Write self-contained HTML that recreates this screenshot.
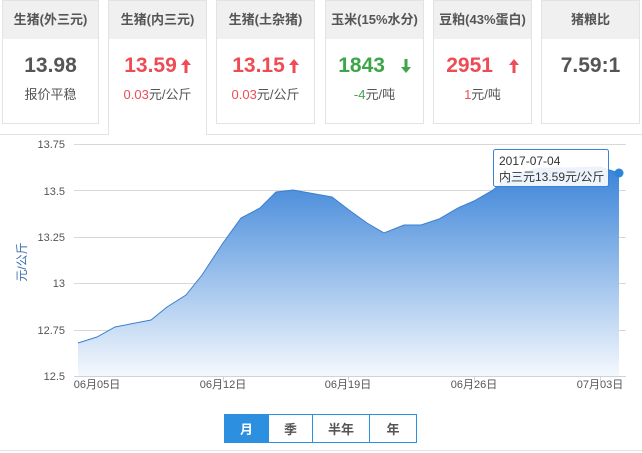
<!DOCTYPE html>
<html><head><meta charset="utf-8"><style>
body{margin:0;width:642px;height:453px;background:#fff;font-family:"Liberation Sans","Noto Sans CJK SC",sans-serif;position:relative;overflow:hidden}
.c{position:absolute;top:0;height:124px;border:1px solid #e3e3e3;background:#fff;box-sizing:border-box;text-align:center}
.c .h{background:#f0f0f0;height:38px;line-height:38px;font-size:13px;font-weight:bold;color:#555}
.c .v{margin-top:12px;font-size:21px;font-weight:bold;color:#555;height:30px;line-height:30px}
.c .s{font-size:13px;color:#555;margin-top:3px}
.r{color:#ee4b55!important}.g{color:#3ea649!important}
.act{height:135px;border-bottom:none;z-index:2}
.btn{position:absolute;top:414px;height:29px;line-height:29px;text-align:center;font-size:13px;font-weight:bold;color:#555;border:1px solid #2d8fdf;box-sizing:border-box;background:#fff}
.ar{display:inline-block;vertical-align:-1px;margin-left:4px}
</style></head><body>
<div class="c" style="left:2px;width:97px"><div class="h">生猪(外三元)</div><div class="v">13.98</div><div class="s">报价平稳</div></div>
<div class="c act" style="left:108px;width:99px"><div class="h">生猪(内三元)</div><div class="v r">13.59<svg class="ar" width="10" height="14"><path d="M5,0 L10,6 L6.5,6 L6.5,14 L3.5,14 L3.5,6 L0,6 Z" fill="#ee4b55"/></svg></div><div class="s"><span class="r">0.03</span>元/公斤</div></div>
<div class="c" style="left:216px;width:99px"><div class="h">生猪(土杂猪)</div><div class="v r">13.15<svg class="ar" width="10" height="14"><path d="M5,0 L10,6 L6.5,6 L6.5,14 L3.5,14 L3.5,6 L0,6 Z" fill="#ee4b55"/></svg></div><div class="s"><span class="r">0.03</span>元/公斤</div></div>
<div class="c" style="left:325px;width:99px"><div class="h">玉米(15%水分)</div><div class="v g">1843 <svg class="ar" style="margin-left:10px" width="10" height="14"><path d="M5,14 L10,8 L6.5,8 L6.5,0 L3.5,0 L3.5,8 L0,8 Z" fill="#3ea649"/></svg></div><div class="s"><span class="g">-4</span>元/吨</div></div>
<div class="c" style="left:433px;width:99px"><div class="h">豆粕(43%蛋白)</div><div class="v r">2951 <svg class="ar" style="margin-left:10px" width="10" height="14"><path d="M5,0 L10,6 L6.5,6 L6.5,14 L3.5,14 L3.5,6 L0,6 Z" fill="#ee4b55"/></svg></div><div class="s"><span class="r">1</span>元/吨</div></div>
<div class="c" style="left:541px;width:99px"><div class="h">猪粮比</div><div class="v">7.59:1</div></div>
<div style="position:absolute;left:0;top:134px;width:642px;height:1px;background:#e3e3e3"></div>
<div style="position:absolute;left:0;top:450px;width:642px;height:1px;background:#e3e3e3"></div>
<svg style="position:absolute;left:0;top:0" width="642" height="453">
<defs><linearGradient id="gr" x1="0" y1="0" x2="0" y2="1"><stop offset="0" stop-color="#3a83d8"/><stop offset="1" stop-color="#f4f8fd"/></linearGradient></defs>
<g stroke="#d8d8d8" stroke-width="1"><line x1="74" y1="144.5" x2="626" y2="144.5"/><line x1="74" y1="190.5" x2="626" y2="190.5"/><line x1="74" y1="237.5" x2="626" y2="237.5"/><line x1="74" y1="283.5" x2="626" y2="283.5"/><line x1="74" y1="330.5" x2="626" y2="330.5"/></g>
<line x1="74" y1="376.5" x2="626" y2="376.5" stroke="#c8d4e4"/>
<path d="M78,343 L97,337 L115,327 L151,320 L167,307 L186,295 L202,275 L223,243 L241,218 L260,208 L276,192 L293,190 L332,197 L349,210 L367,223 L384,233 L404,225 L421,225 L439,219 L458,208 L474,201 L493,190 L510,176 L540,168 L570,168 L600,167 L619,173 L619,376 L78,376 Z" fill="url(#gr)"/>
<path d="M78,343 L97,337 L115,327 L151,320 L167,307 L186,295 L202,275 L223,243 L241,218 L260,208 L276,192 L293,190 L332,197 L349,210 L367,223 L384,233 L404,225 L421,225 L439,219 L458,208 L474,201 L493,190 L510,176 L540,168 L570,168 L600,167 L619,173" fill="none" stroke="#3a7fd0" stroke-width="1"/>
<circle cx="619" cy="173" r="4.5" fill="#2d84d8"/>
<g font-size="11" fill="#555" text-anchor="end" font-family="Liberation Sans,sans-serif"><text x="65" y="148">13.75</text><text x="65" y="195">13.5</text><text x="65" y="241">13.25</text><text x="65" y="287">13</text><text x="65" y="334">12.75</text><text x="65" y="380">12.5</text></g>
<g font-size="11" fill="#555" text-anchor="middle"><text x="97" y="388">06月05日</text><text x="223" y="388">06月12日</text><text x="348" y="388">06月19日</text><text x="474" y="388">06月26日</text><text x="600" y="388">07月03日</text></g>
<g stroke="#c8d4e4"><line x1="223.5" y1="376" x2="223.5" y2="382"/><line x1="348.5" y1="376" x2="348.5" y2="382"/><line x1="474.5" y1="376" x2="474.5" y2="382"/><line x1="600.5" y1="376" x2="600.5" y2="382"/></g>
<text transform="translate(26,262) rotate(-90)" font-size="12" fill="#3a6fb0" text-anchor="middle">元/公斤</text>
<rect x="493.5" y="149.5" width="115" height="37" rx="2" fill="#fff" fill-opacity="0.9" stroke="#3a83d8"/>
<text x="499" y="165" font-size="12" fill="#333">2017-07-04</text>
<text x="499" y="181" font-size="12" fill="#333">内三元13.59元/公斤</text>
</svg>
<div class="btn" style="left:224px;width:45px;background:#2d8fdf;color:#fff">月</div>
<div class="btn" style="left:268px;width:45px">季</div>
<div class="btn" style="left:312px;width:58px">半年</div>
<div class="btn" style="left:369px;width:48px">年</div>
</body></html>
